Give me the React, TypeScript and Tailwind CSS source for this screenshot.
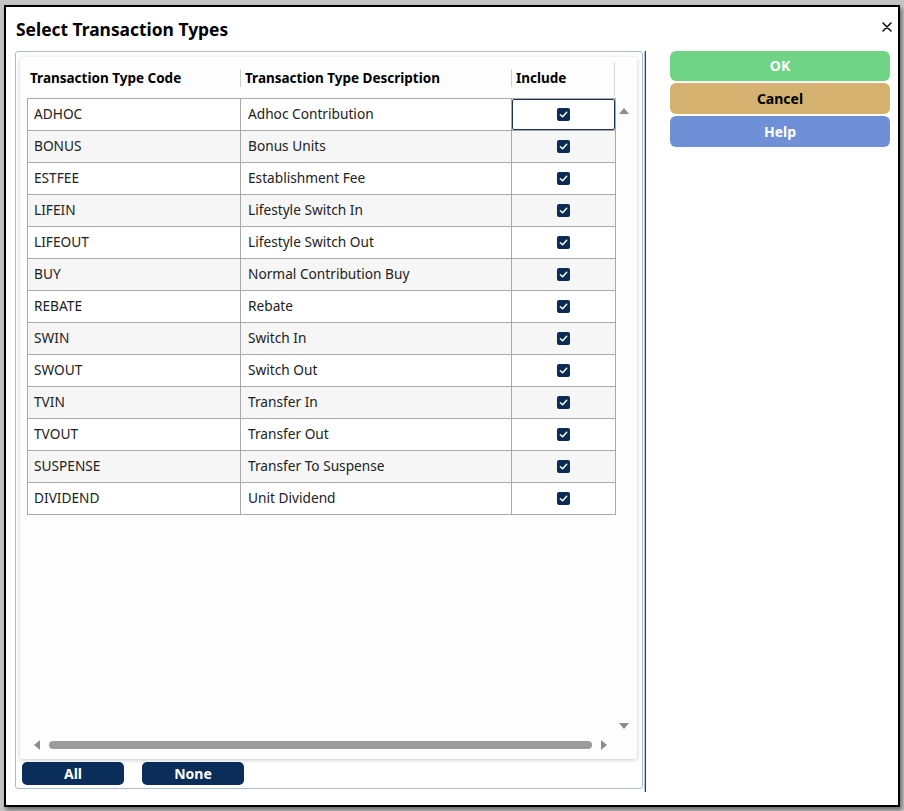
import React from 'react';

interface TxnType {
  code: string;
  description: string;
  include: boolean;
}

const txnTypes: TxnType[] = [
  { code: 'ADHOC', description: 'Adhoc Contribution', include: true },
  { code: 'BONUS', description: 'Bonus Units', include: true },
  { code: 'ESTFEE', description: 'Establishment Fee', include: true },
  { code: 'LIFEIN', description: 'Lifestyle Switch In', include: true },
  { code: 'LIFEOUT', description: 'Lifestyle Switch Out', include: true },
  { code: 'BUY', description: 'Normal Contribution Buy', include: true },
  { code: 'REBATE', description: 'Rebate', include: true },
  { code: 'SWIN', description: 'Switch In', include: true },
  { code: 'SWOUT', description: 'Switch Out', include: true },
  { code: 'TVIN', description: 'Transfer In', include: true },
  { code: 'TVOUT', description: 'Transfer Out', include: true },
  { code: 'SUSPENSE', description: 'Transfer To Suspense', include: true },
  { code: 'DIVIDEND', description: 'Unit Dividend', include: true },
];

function CheckBox() {
  return (
    <div className="w-[13px] h-[13px] rounded-[2px] bg-[#0d2c54] flex items-center justify-center">
      <svg width="9" height="9" viewBox="0 0 10 10">
        <path d="M1.5 5.2 L4 7.5 L8.6 2.6" fill="none" stroke="white" strokeWidth="1.6" strokeLinecap="round" strokeLinejoin="round" />
      </svg>
    </div>
  );
}

export default function App() {
  return (
    <div
      className="w-[904px] h-[811px] bg-[#c4c4c4] pt-[5px] pl-[4px]"
      style={{ fontFamily: '"Noto Sans", "Open Sans", sans-serif' }}
    >
      <div className="w-[896px] h-[802px] bg-white border-2 border-black shadow-[2px_3px_4px_rgba(0,0,0,0.45)] flex flex-col">
        {/* Title bar */}
        <div className="h-[44px] flex items-center justify-between pl-[10px] pr-[6px]">
          <h1 className="text-[17.4px] font-bold text-black leading-none mt-[2px]">Select Transaction Types</h1>
          <svg width="10" height="10" viewBox="0 0 10 10" className="mt-[-4px]">
            <path d="M1 1 L9 9 M9 1 L1 9" stroke="#111" strokeWidth="1.6" strokeLinecap="round" />
          </svg>
        </div>

        {/* Body */}
        <div className="flex pl-[9px]">
          {/* Left panel */}
          <div className="w-[628px] h-[738px] border border-[#a9bccf] rounded-[3px] px-[4px] pt-[5px] flex flex-col">
            <div className="w-[617px] h-[702px] bg-[#fdfdfd] rounded-[3px] shadow-[0_1px_4px_rgba(0,0,0,0.22)] flex flex-col">
              <div className="flex h-[681px]">
                {/* Grid */}
                <div className="pl-[7px] pt-[7px] w-[595px]">
                  <div className="flex h-[28px] items-center text-[13.5px] font-bold text-black">
                    <div className="w-[213px] pl-[3px]">Transaction Type Code</div>
                    <div className="w-[271px] h-full flex items-center">
                      <div className="w-px h-[18px] bg-[#d0d0d0]" />
                      <span className="pl-[4px]">Transaction Type Description</span>
                    </div>
                    <div className="w-[104px] h-full flex items-center">
                      <div className="w-px h-[18px] bg-[#d0d0d0]" />
                      <span className="pl-[4px] flex-1">Include</span>
                      <div className="w-px h-[34px] bg-[#d6d6d6] self-start mt-[-2px]" />
                    </div>
                  </div>
                  <div className="mt-[6px] border-t border-l border-[#a9a9a9] w-[589px]">
                    {txnTypes.map((t, i) => (
                      <div
                        key={t.code}
                        className={`flex h-[32px] text-[13.7px] text-[#222] ${i % 2 === 1 ? 'bg-[#f6f6f6]' : 'bg-white'}`}
                      >
                        <div className="w-[213px] border-r border-b border-[#a9a9a9] flex items-center pl-[6px] pb-[1px]">
                          {t.code}
                        </div>
                        <div className="w-[271px] border-r border-b border-[#a9a9a9] flex items-center pl-[7px] pb-[1px]">
                          {t.description}
                        </div>
                        <div className="w-[104px] border-r border-b border-[#a9a9a9] relative flex items-center justify-center">
                          {i === 0 && (
                            <div className="absolute inset-[0px] border border-[#1c3350] rounded-[2px]" />
                          )}
                          {t.include && <CheckBox />}
                        </div>
                      </div>
                    ))}
                  </div>
                </div>
                {/* Vertical scrollbar */}
                <div className="w-[17px] flex flex-col items-center justify-between pt-[51px] pb-[9px]">
                  <div className="w-0 h-0 border-l-[5px] border-r-[5px] border-b-[6px] border-l-transparent border-r-transparent border-b-[#8c8c8c]" />
                  <div className="w-0 h-0 border-l-[5px] border-r-[5px] border-t-[6px] border-l-transparent border-r-transparent border-t-[#8c8c8c]" />
                </div>
              </div>
              {/* Horizontal scrollbar */}
              <div className="h-[14px] flex items-center pl-[14px]">
                <div className="w-0 h-0 border-t-[5px] border-b-[5px] border-r-[6px] border-t-transparent border-b-transparent border-r-[#8c8c8c]" />
                <div className="ml-[9px] w-[543px] h-[8px] rounded-full bg-[#9b9b9b]" />
                <div className="ml-[9px] w-0 h-0 border-t-[5px] border-b-[5px] border-l-[6px] border-t-transparent border-b-transparent border-l-[#8c8c8c]" />
              </div>
            </div>
            <div className="flex gap-[18px] mt-[3px] pl-[2px]">
              <button className="w-[102px] h-[23px] rounded-[5px] bg-[#0b2d59] text-white text-[14px] font-bold leading-none">
                All
              </button>
              <button className="w-[102px] h-[23px] rounded-[5px] bg-[#0b2d59] text-white text-[14px] font-bold leading-none">
                None
              </button>
            </div>
          </div>

          {/* Divider */}
          <div className="w-[2px] h-[741px] ml-[1px] bg-[#233e6a] border-l border-[#b7c8e0]" />

          {/* Action buttons */}
          <div className="ml-[24px] w-[220px] flex flex-col gap-[2px]">
            <button className="h-[30px] rounded-[6px] bg-[#6fd486] text-white text-[14px] font-bold pb-[1px]">OK</button>
            <button className="h-[31px] rounded-[6px] bg-[#d5b26f] text-black text-[14px] font-bold">Cancel</button>
            <button className="h-[31px] rounded-[6px] bg-[#6f90d6] text-white text-[14px] font-bold">Help</button>
          </div>
        </div>
      </div>
    </div>
  );
}
